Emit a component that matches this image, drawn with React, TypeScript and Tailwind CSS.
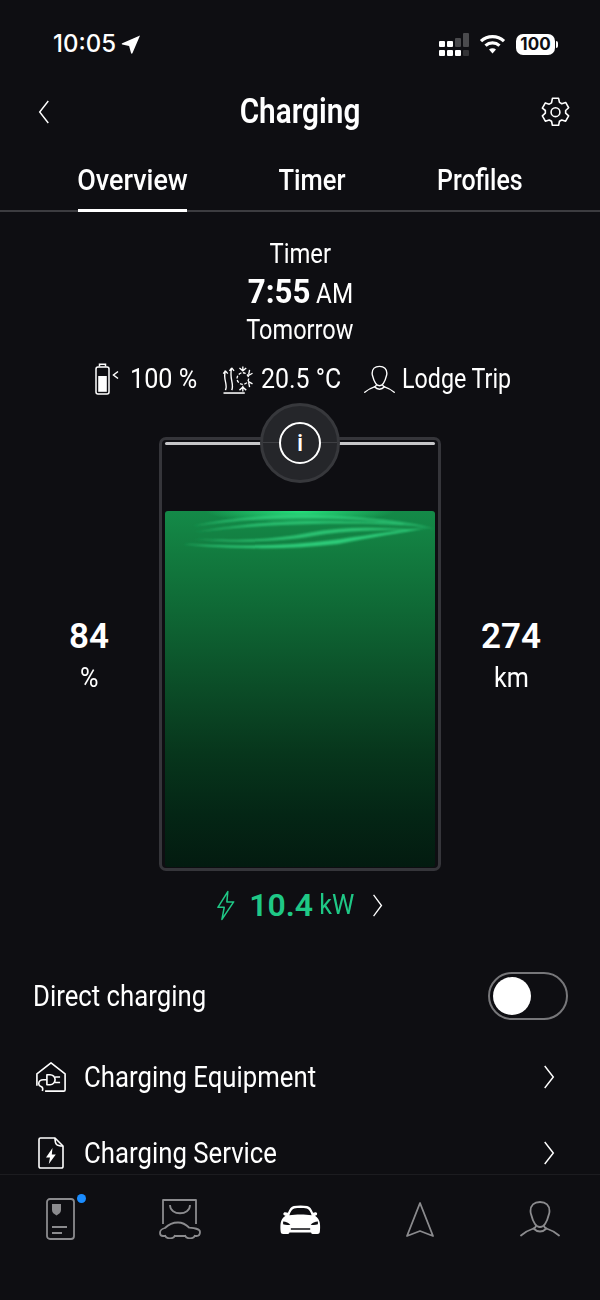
import React from "react";

function Chevron({ className = "" }: { className?: string }) {
  return (
    <svg viewBox="0 0 14 26" className={className} fill="none" stroke="currentColor" strokeWidth="1.7" preserveAspectRatio="none">
      <path d="M2 1 12 13 2 25" />
    </svg>
  );
}

function LocationArrow() {
  return (
    <svg viewBox="0 0 20 20" className="w-[20px] h-[19px] text-white" fill="currentColor">
      <path d="M19.500 .5 11.500 19.300c-.3.7-1.200.6-1.400 0L8 11.500.8 10c-.7-.2-.8-1.100 0-1.400z" />
    </svg>
  );
}

function Signal() {
  const dot = "w-[6px] h-[6px] rounded-[1px] bg-white";
  return (
    <div className="flex items-end gap-[2px]">
      <div className="flex flex-col gap-[3px]"><div className={dot} /><div className={dot} /></div>
      <div className="flex flex-col gap-[3px]"><div className={dot} /><div className={dot} /></div>
      <div className="flex flex-col gap-[3px]"><div className="w-[6px] h-[9px] rounded-[1px] bg-[#4a4a4d]" /><div className={dot} /></div>
      <div className="flex flex-col gap-[3px]"><div className="w-[6px] h-[14px] rounded-[1px] bg-[#4a4a4d]" /><div className="w-[6px] h-[6px] rounded-[1px] bg-[#333336]" /></div>
    </div>
  );
}

function Wifi() {
  return (
    <svg viewBox="0 0 26 20" className="w-[27px] h-[20px] text-white" fill="none" stroke="currentColor" strokeWidth="3.200">
      <path d="M1.500 7.200C8 1 18 1 24.500 7.200" />
      <path d="M6 11.600c4-3.600 10-3.600 14 0" />
      <path d="M13 19.500 9.500 15.500c2-1.600 5-1.600 7 0z" fill="currentColor" stroke="none" />
    </svg>
  );
}

function Gear() {
  return (
    <svg viewBox="0 0 30 34" className="w-[29px] h-[30px] text-white" fill="none" stroke="currentColor" strokeWidth="1.800" strokeLinejoin="round">
      <path d="M11.500 1.500h7l1 4.600 2.600 1.500 4.400-1.400 3.400 6-3.400 3.100v3l3.400 3.100-3.400 6-4.400-1.400-2.600 1.500-1 4.600h-7l-1-4.600-2.600-1.500-4.400 1.400-3.400-6 3.400-3.100v-3L.1 12.700l3.400-6 4.400 1.400 2.600-1.500z" />
      <circle cx="15" cy="17.200" r="5" />
    </svg>
  );
}

function BatteryLimit() {
  return (
    <svg viewBox="0 0 24 32" className="w-[24px] h-[32px] text-white" fill="none" stroke="currentColor" strokeWidth="1.500">
      <rect x="1" y="4" width="13" height="27" rx="2" />
      <path d="M4.500 3.500V1.200h6v2.300" />
      <rect x="3.200" y="13" width="8.600" height="15.800" fill="currentColor" stroke="none" />
      <path d="M23 8.500 18.500 12l4.500 3.500" />
    </svg>
  );
}

function Climate() {
  return (
    <svg viewBox="0 0 32 30" className="w-[32px] h-[29px] text-white" fill="none" stroke="currentColor" strokeWidth="1.400">
      <path d="M1 29h22" strokeWidth="1.600" />
      <path d="M3 26c3-6-3-11 0-20M3 6 .8 9M3 6l2.400 3" />
      <path d="M9.500 26c3-6-3-12 0-23M9.500 3 7.200 6M9.500 3l2.400 3" />
      <circle cx="21" cy="14" r="6" strokeDasharray="3 1.600" />
      <path d="M21 1.500v5M17.500 3l3.500 3 3.500-3M21 21.500v6M17.500 26l3.500-3 3.500 3M31 8.500l-4.500 2.600M31 19.500l-4.500-2.600M28 5l-1 5M28 23l-1-5" />
    </svg>
  );
}

function Person({ className = "" }: { className?: string }) {
  return (
    <svg viewBox="0 0 40 36" className={className} fill="none" stroke="currentColor" strokeWidth="1.800" strokeLinecap="round" strokeLinejoin="round">
      <path d="M20 1c-6 0-9.500 3.500-9.500 9 0 1.500.2 2.800.8 4 .8 3.500 2 6.500 3.700 9 1 1.500 2.500 3 5 3s4-1.500 5-3c1.700-2.500 2.900-5.500 3.700-9 .6-1.200.8-2.500.8-4 0-5.500-3.500-9-9.500-9z" />
      <path d="M1 34.500c3-2.500 6-5 12.500-7 1.500-.5 2.300-1.500 2.500-2.500M39 34.500c-3-2.500-6-5-12.500-7-1.500-.5-2.300-1.500-2.500-2.500" />
      <path d="M13.500 27.500c2 2 4 3 6.500 3s4.500-1 6.500-3" />
    </svg>
  );
}

function Bolt() {
  return (
    <svg viewBox="0 0 20 34" className="w-[18px] h-[31px] text-[#1fc886]" fill="none" stroke="currentColor" strokeWidth="1.700" strokeLinejoin="round">
      <path d="M12 1.500 1 19h7l-2.500 13.500L18.500 13h-7.500z" />
    </svg>
  );
}

function HousePlug() {
  return (
    <svg viewBox="0 0 33 33" className="w-[30px] h-[30px] text-white" fill="none" stroke="currentColor" strokeWidth="1.800" strokeLinejoin="round">
      <path d="M10 32h20.500a1.500 1.500 0 0 0 1.500-1.500V13L16.500 1 1 13v13" />
      <path d="M12 14h3.500a5.500 5.500 0 0 1 0 11H12zM21 16.500h5.500M21 22.500h5.500" />
      <path d="M12 19.500H8c-3 0-5 2-5 4.500 0 1.500 1 2.500 2.500 3 1.500.6 2.500 2 1.500 5" />
    </svg>
  );
}

function DocBolt() {
  return (
    <svg viewBox="0 0 26 32" className="w-[26px] h-[32px] text-white" fill="none" stroke="currentColor" strokeWidth="1.600" strokeLinejoin="round">
      <path d="M17 1H2.500A1.500 1.500 0 0 0 1 2.500v27A1.500 1.500 0 0 0 2.500 31h21a1.500 1.500 0 0 0 1.500-1.500V9z" />
      <path d="M17 1c0 6 1 8 8 8" />
      <path d="M14.500 11 8 20.500h4L10.800 27l7-9.500h-4z" fill="currentColor" stroke="none" />
    </svg>
  );
}

function PassIcon() {
  return (
    <svg viewBox="0 0 29 42" className="w-[29px] h-[42px] text-[#8b8b8e]" fill="none" stroke="currentColor" strokeWidth="1.800">
      <rect x="1" y="1" width="27" height="40" rx="3" />
      <path d="M6 6h9v6c0 2.500-2 4-4.500 5.500C8 16 6 14.500 6 12z" fill="currentColor" stroke="none" />
      <path d="M6 29h15M6 35h10" />
    </svg>
  );
}

function ShopCarIcon() {
  return (
    <svg viewBox="0 0 42 40" className="w-[42px] h-[40px] text-[#8b8b8e]" fill="none" stroke="currentColor" strokeWidth="1.800" strokeLinejoin="round">
      <path d="M4 25V1h33v24" />
      <path d="M11 6c0 11 20 11 20 0" />
      <path d="M6 37H4c-2 0-3-1-3-3 0-3 1-4 5-5 3-3 7-5.500 13-5.500 5 0 8 2 11 5 5 .5 11 1 11 4.500 0 3-1 4-3.500 4H35M16 37h10" />
      <path d="M6 36c1 4.500 9 4.500 10 0M26 36c1 4.500 9 4.500 10 0" />
    </svg>
  );
}

function CarFront() {
  return (
    <svg viewBox="0 0 44 30" className="w-[43px] h-[29px]">
      <path fill="#fff" d="M9 8c1.500-4 3.500-6.500 6-7 4-.8 10-.8 14 0 2.500.5 4.500 3 6 7l2.500-.5c1.500 0 2.500 2 1 3l-1.500.7c3 2 4.500 4.500 5 7.500.4 2.500.4 6 0 9-.2 1.500-1 2.300-2.500 2.300h-5c-1 0-1.500-.6-1.500-1.500H10.500c0 .9-.5 1.500-1.500 1.500H4c-1.500 0-2.300-.8-2.500-2.300-.4-3-.4-6.500 0-9 .5-3 2-5.500 5-7.500L5 10.500c-1.500-1-.5-3 1-3z" />
      <path fill="#0e0e12" d="M10.500 10.500c1-3.500 3-6.500 5-7 4-.6 9-.6 13 0 2 .5 4 3.500 5 7-6.500-1-16.500-1-23 0zM4 17c3 .2 6 1.500 7.500 3.500-2.500.5-5.500.4-7.500-.5zM40 17c-3 .2-6 1.500-7.500 3.500 2.500.5 5.500.4 7.500-.5zM12 24h20v1.600H12z" />
    </svg>
  );
}

function NavArrow() {
  return (
    <svg viewBox="0 0 28 35" className="w-[28px] h-[35px] text-[#8b8b8e]" fill="none" stroke="currentColor" strokeWidth="1.800" strokeLinejoin="round">
      <path d="M14 1 1 34l13-5 13 5z" />
    </svg>
  );
}

export default function App() {
  return (
    <div className="font-['Roboto',sans-serif] w-[600px] h-[1300px] bg-[#0e0e12] flex flex-col overflow-hidden">
      <div className="flex-1 min-h-0 overflow-hidden">
        {/* status bar */}
        <div className="h-[88px] flex items-center justify-between pl-[53px] pr-[42px]">
          <div className="flex items-center gap-[5px]">
            <span className="font-['Inter',sans-serif] text-[24px] leading-[28px] font-medium text-white">10:05</span>
            <LocationArrow />
          </div>
          <div className="flex items-center gap-[10px]">
            <Signal />
            <Wifi />
            <div className="flex items-center gap-[1px]">
              <div className="w-[39px] h-[21px] rounded-[7px] bg-white flex items-center justify-center font-['Inter',sans-serif] text-[17px] leading-none font-bold text-[#0e0e12]">100</div>
              <div className="w-[2px] h-[7px] rounded-r-[2px] bg-white" />
            </div>
          </div>
        </div>

        {/* header */}
        <div className="h-[46px] grid grid-cols-[1fr_auto_1fr] items-center px-[30px]">
          <Chevron className="ml-[8px] w-[12px] h-[24px] text-white rotate-180" />
          <span className="mt-[1px] text-[35px] leading-[46px] font-semibold text-white inline-block scale-x-[0.85]">Charging</span>
          <div className="justify-self-end"><Gear /></div>
        </div>

        {/* tabs */}
        <div className="mt-[29px] h-[49px] border-b-2 border-[#3c3c40] flex gap-[92px] pl-[78px]">
          <div className="relative w-[109px] flex justify-center">
            <span className="text-[29px] leading-[34px] font-medium text-white whitespace-nowrap inline-block scale-x-[0.93]">Overview</span>
            <div className="absolute top-[46px] left-0 right-0 h-[3px] bg-white" />
          </div>
          <div className="w-[66px] flex justify-center">
            <span className="text-[29px] leading-[34px] font-medium text-white whitespace-nowrap inline-block scale-x-[0.88]">Timer</span>
          </div>
          <div className="w-[85px] flex justify-center">
            <span className="text-[29px] leading-[34px] font-medium text-white whitespace-nowrap inline-block scale-x-[0.86]">Profiles</span>
          </div>
        </div>

        {/* timer */}
        <div className="mt-[25px] flex flex-col items-center text-white">
          <span className="text-[28px] leading-[34px] inline-block scale-x-[0.85]">Timer</span>
          <div className="h-[40px] flex items-baseline gap-[1px]">
            <span className="text-[34px] leading-[40px] font-bold inline-block scale-x-[0.92]">7:55</span>
            <span className="text-[27px] leading-[40px] inline-block scale-x-[0.9]">AM</span>
          </div>
          <span className="text-[28px] leading-[38px] inline-block scale-x-[0.84]">Tomorrow</span>
        </div>

        {/* limits */}
        <div className="mt-[11px] h-[38px] flex items-center pl-[95px]">
          <BatteryLimit />
          <span className="ml-[11px] w-[92px] text-[28px] leading-[32px] text-white whitespace-nowrap inline-block origin-left scale-x-[0.9]">100 %</span>
          <Climate />
          <span className="ml-[7px] w-[103px] text-[28px] leading-[32px] text-white whitespace-nowrap inline-block origin-left scale-x-[0.89]">20.5 °C</span>
          <Person className="w-[31px] h-[29px] text-white" />
          <span className="ml-[7px] text-[28px] leading-[32px] text-white whitespace-nowrap inline-block origin-left scale-x-[0.83]">Lodge Trip</span>
        </div>

        {/* battery */}
        <div className="mt-[39px] flex">
          <div className="w-[159px] pl-[19px] pt-[180px] flex flex-col items-center text-white">
            <span className="text-[35px] leading-[40px] font-semibold">84</span>
            <span className="text-[28px] leading-[42px] inline-block scale-x-[0.9]">%</span>
          </div>
          <div className="relative w-[282px] h-[434px] border-[3px] border-[#35353a] rounded-[7px] px-[3px] pb-[1px] flex flex-col">
            <div className="mt-[2px] h-[3px] rounded-[2px] bg-[#c6c6c8]" />
            <div className="mt-[66px] flex-1 rounded-[3px] bg-[linear-gradient(180deg,#148a48_0%,#127b3f_12%,#0f6835_28%,#0b4c27_50%,#07361c_68%,#042615_85%,#031b10_100%)] overflow-hidden">
              <svg viewBox="0 0 270 46" className="w-full h-[46px]">
                <defs>
                  <radialGradient id="glow">
                    <stop offset="0%" stopColor="#28e680" stopOpacity="0.95" />
                    <stop offset="100%" stopColor="#28e680" stopOpacity="0" />
                  </radialGradient>
                  <filter id="soft" x="-10%" y="-50%" width="120%" height="200%"><feGaussianBlur stdDeviation="0.800" /></filter>
                </defs>
                <ellipse cx="135" cy="0" rx="95" ry="12" fill="url(#glow)" />
                <g filter="url(#soft)" fill="#36e088">
                  <path fillOpacity="0.6" d="M28 15C70 6 115 3 150 4s85 4 120 14c-35-6-80-11-122-11S70 9 28 15z" />
                  <path fillOpacity="0.65" d="M30 21C70 15 100 10 150 10s80 1 98 5c-25-2-60-3-100-2S70 16 30 21z" />
                  <path fillOpacity="0.7" d="M28 28c45 2 80 1 115-6s70-6 110-3c-40 0-70 0-105 6s-80 7-120 3z" />
                  <path fillOpacity="0.8" d="M18 33c55 3 105 2 150-4s65-10 95-12c-30 5-55 9-90 16-50 6-110 5-155 0z" />
                </g>
              </svg>
            </div>
            {/* info button */}
            <div className="absolute left-[98px] -top-[37px] w-[80px] h-[80px] rounded-full bg-[#25262a] border-[3px] border-[#37383c] flex items-center justify-center">
              <div className="absolute left-0 right-0 top-[36px] h-[1px] bg-[#3f4044]" />
              <div className="relative w-[42px] h-[42px] rounded-full border-2 border-white bg-[#25262a] flex items-center justify-center text-[24px] leading-none font-medium text-white">i</div>
            </div>
          </div>
          <div className="w-[159px] pr-[19px] pt-[180px] flex flex-col items-center text-white">
            <span className="text-[35px] leading-[40px] font-semibold">274</span>
            <span className="text-[28px] leading-[42px] inline-block scale-x-[0.9]">km</span>
          </div>
        </div>

        {/* power */}
        <div className="mt-[16px] h-[36px] flex items-center justify-center">
          <Bolt />
          <span className="ml-[14px] text-[32px] leading-[36px] font-semibold text-[#1fc886]">10.4</span>
          <span className="ml-[5px] text-[27px] leading-[36px] text-[#1fc886] inline-block scale-x-[0.93]">kW</span>
          <Chevron className="ml-[16px] w-[11px] h-[23px] text-white" />
        </div>

        {/* direct charging */}
        <div className="mt-[49px] h-[48px] flex items-center justify-between pl-[33px] pr-[32px]">
          <span className="text-[29px] leading-[34px] text-white inline-block origin-left scale-x-[0.888]">Direct charging</span>
          <div className="w-[80px] h-[48px] rounded-full border-2 border-[#77777a] pl-[3px] flex items-center">
            <div className="w-[38px] h-[38px] rounded-full bg-white" />
          </div>
        </div>

        {/* links */}
        <div className="mt-[37px] pl-[33px] flex flex-col gap-[36px]">
          <div className="flex items-center h-[40px] pr-[45px]">
            <div className="w-[51px] pl-[3px] flex items-center"><HousePlug /></div>
            <span className="flex-1 text-[29px] leading-[34px] text-white inline-block origin-left scale-x-[0.888]">Charging Equipment</span>
            <Chevron className="w-[12px] h-[24px] text-white" />
          </div>
          <div className="flex items-center h-[40px] pr-[45px]">
            <div className="w-[51px] pl-[5px] flex items-center"><DocBolt /></div>
            <span className="flex-1 text-[29px] leading-[34px] text-white inline-block origin-left scale-x-[0.888]">Charging Service</span>
            <Chevron className="w-[12px] h-[24px] text-white" />
          </div>
        </div>
      </div>

      {/* bottom nav */}
      <div className="h-[126px] shrink-0 border-t border-[#1c1c20]">
        <div className="h-[88px] grid grid-cols-5 items-center justify-items-center">
          <div className="relative">
            <PassIcon />
            <div className="absolute -right-[11px] -top-[4px] w-[9px] h-[9px] rounded-full bg-[#1a8cff]" />
          </div>
          <ShopCarIcon />
          <CarFront />
          <NavArrow />
          <Person className="w-[40px] h-[36px] text-[#8b8b8e]" />
        </div>
      </div>
    </div>
  );
}
